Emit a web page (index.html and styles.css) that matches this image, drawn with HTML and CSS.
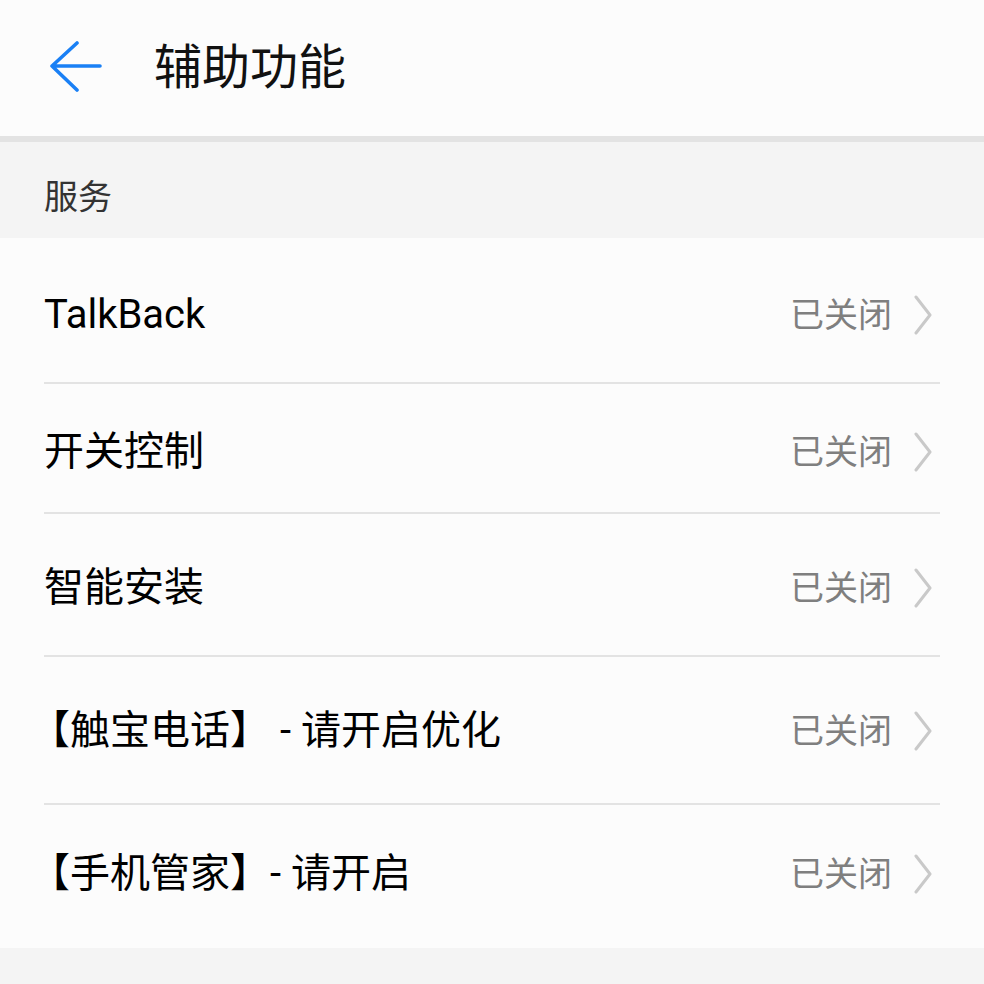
FILE: index.html
```html
<!DOCTYPE html>
<html lang="zh-CN">
<head>
<meta charset="utf-8">
<title>辅助功能</title>
<link rel="stylesheet" href="styles.css">
</head>
<body>
<header class="appbar">
  <svg class="back" width="52" height="52" viewBox="0 0 52 52" aria-hidden="true">
    <path d="M27 2 L2 25 L27 49 M2 25 H50" fill="none" stroke="#1a80f5" stroke-width="3.6" stroke-linecap="round" stroke-linejoin="round"/>
  </svg>
  <h1 class="title">辅助功能</h1>
</header>
<div class="section">服务</div>
<ul class="list">
  <li class="row r1"><span class="label">TalkBack</span><span class="status">已关闭<svg class="chev" width="20" height="40" viewBox="0 0 20 40"><path d="M3 2 L17 20 L3 38" fill="none" stroke="#c9c9c9" stroke-width="3" stroke-linecap="round" stroke-linejoin="round"/></svg></span></li>
  <li class="row r2"><span class="label">开关控制</span><span class="status">已关闭<svg class="chev" width="20" height="40" viewBox="0 0 20 40"><path d="M3 2 L17 20 L3 38" fill="none" stroke="#c9c9c9" stroke-width="3" stroke-linecap="round" stroke-linejoin="round"/></svg></span></li>
  <li class="row r3"><span class="label">智能安装</span><span class="status">已关闭<svg class="chev" width="20" height="40" viewBox="0 0 20 40"><path d="M3 2 L17 20 L3 38" fill="none" stroke="#c9c9c9" stroke-width="3" stroke-linecap="round" stroke-linejoin="round"/></svg></span></li>
  <li class="row r4"><span class="label label-bracket">【触宝电话】 - 请开启优化</span><span class="status">已关闭<svg class="chev" width="20" height="40" viewBox="0 0 20 40"><path d="M3 2 L17 20 L3 38" fill="none" stroke="#c9c9c9" stroke-width="3" stroke-linecap="round" stroke-linejoin="round"/></svg></span></li>
  <li class="row r5"><span class="label label-bracket">【手机管家】- 请开启</span><span class="status">已关闭<svg class="chev" width="20" height="40" viewBox="0 0 20 40"><path d="M3 2 L17 20 L3 38" fill="none" stroke="#c9c9c9" stroke-width="3" stroke-linecap="round" stroke-linejoin="round"/></svg></span></li>
</ul>
</body>
</html>
```
FILE: styles.css
```css
html, body {
  margin: 0;
  padding: 0;
}
body {
  background: #f4f4f4;
  font-family: Roboto, "Noto Sans CJK SC", sans-serif;
  color: #000;
}
.appbar {
  height: 136px;
  background: #fcfcfc;
  border-bottom: 6px solid #e3e3e3;
  display: flex;
  align-items: center;
  padding-left: 50px;
  box-sizing: content-box;
}
.back {
  display: block;
  margin-top: -2px;
}
.title {
  margin: 0 0 0 52px;
  font-size: 48px;
  font-weight: 400;
  line-height: 1;
  color: #111;
}
.section {
  height: 96px;
  box-sizing: border-box;
  padding: 8px 0 0 44px;
  display: flex;
  align-items: center;
  font-size: 34px;
  color: #333;
}
.list {
  list-style: none;
  margin: 0;
  padding: 0 44px;
  background: #fcfcfc;
}
.row {
  display: flex;
  align-items: center;
  justify-content: space-between;
  box-sizing: border-box;
  border-bottom: 2px solid #e3e3e3;
  padding-right: 7px;
}
.row:last-child {
  border-bottom: none;
}
.r1 { height: 146px; padding-top: 10px; }
.r2 { height: 130px; padding-top: 8px; }
.r3 { height: 143px; padding-top: 7px; }
.r4 { height: 148px; padding-top: 2px; }
.r5 { height: 143px; padding-bottom: 6px; }
.label {
  font-size: 40px;
  line-height: 1;
  color: #000;
}
.label-bracket {
  margin-left: -14px;
}
.status {
  display: flex;
  align-items: center;
  font-size: 34px;
  line-height: 1;
  color: #7f7f7f;
}
.chev {
  display: block;
  margin-left: 21px;
}
```
